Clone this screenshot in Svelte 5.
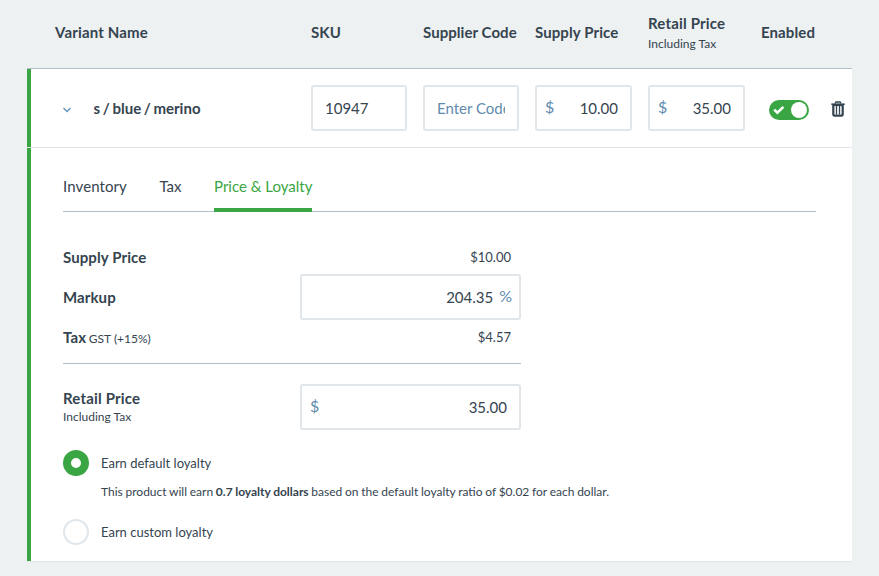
<script>
  let sku = $state('10947');
  let supplierCode = $state('');
  let supplyPrice = $state('10.00');
  let retailPrice = $state('35.00');
  let markup = $state('204.35');
  let enabled = $state(true);
  let loyalty = $state('default');
  let active = $state('Price & Loyalty');
  const tabs = ['Inventory', 'Tax', 'Price & Loyalty'];
</script>

<main>
  <header class="columns head">
    <span class="name">Variant Name</span>
    <span>SKU</span>
    <span class="tight">Supplier Code</span>
    <span>Supply Price</span>
    <span class="retail">Retail Price<small>Including Tax</small></span>
    <span>Enabled</span>
  </header>

  <section class="columns variant">
    <div class="name title">
      <svg class="chevron" width="8" height="6" viewBox="0 0 8 6"><path d="M.5 1 4 4.5 7.5 1" fill="none" stroke="#5f8fb8" stroke-width="1.3" /></svg>
      <strong>s / blue / merino</strong>
    </div>
    <input class="field" aria-label="SKU" bind:value={sku} />
    <input class="field" aria-label="Supplier code" placeholder="Enter Code" bind:value={supplierCode} />
    <label class="field money"><span>$</span><input aria-label="Supply price" bind:value={supplyPrice} /></label>
    <label class="field money"><span>$</span><input aria-label="Retail price" bind:value={retailPrice} /></label>
    <div class="actions">
      <button class="switch" class:off={!enabled} aria-label="Enabled" onclick={() => (enabled = !enabled)}>
        <svg width="12" height="10" viewBox="0 0 12 10"><path d="M1.2 4.6 4.4 7.7 10.4 1.8" fill="none" stroke="#fff" stroke-width="2.5" /></svg>
        <i></i>
      </button>
      <button class="trash" aria-label="Delete">
        <svg width="14" height="16" viewBox="0 0 14 16"><path d="M4.4 2.6V1.7Q4.4 1 5.1 1H8.9Q9.6 1 9.6 1.7V2.6" fill="none" stroke="#35444f" stroke-width="1.3" /><path d="M.3 2.4H13.7V4H.3Z" fill="#35444f" /><path d="M2.3 4V13.4Q2.3 14.7 3.6 14.7H10.4Q11.7 14.7 11.7 13.4V4" fill="none" stroke="#35444f" stroke-width="2.2" /><path d="M2 4.4H12" stroke="#35444f" stroke-width="1.4" /><path d="M5.5 5V13.5M8.5 5V13.5" stroke="#35444f" stroke-width="1.3" /></svg>
      </button>
    </div>
  </section>

  <section class="detail">
    <nav>
      {#each tabs as tab}
        <button class:active={active === tab} onclick={() => (active = tab)}>{tab}</button>
      {/each}
    </nav>

    <div class="pricing">
      <div class="line"><strong>Supply Price</strong><span class="amount">$10.00</span></div>
      <div class="line tall">
        <strong>Markup</strong>
        <label class="field percent"><input aria-label="Markup" bind:value={markup} /><span>%</span></label>
      </div>
      <div class="line"><strong class="tax">Tax <small>GST (+15%)</small></strong><span class="amount">$4.57</span></div>
      <div class="line total">
        <strong class="stack">Retail Price<small>Including Tax</small></strong>
        <label class="field money"><span>$</span><input aria-label="Retail price including tax" bind:value={retailPrice} /></label>
      </div>
    </div>

    <div class="loyalty">
      <label><input type="radio" name="loyalty" value="default" bind:group={loyalty} />Earn default loyalty</label>
      <p>This product will earn <b>0.7 loyalty dollars</b> based on the default loyalty ratio of $0.02 for each dollar.</p>
      <label><input type="radio" name="loyalty" value="custom" bind:group={loyalty} />Earn custom loyalty</label>
    </div>
  </section>
</main>

<style>
  :global(body) { margin: 0; background: #edf1f2; overflow: hidden; }
  main {
    box-sizing: border-box;
    width: 879px;
    height: 576px;
    padding: 0 27px;
    background: #edf1f2;
    color: #35444f;
    font: 15px/20px Lato, sans-serif;
  }
  button, input { font: inherit; color: inherit; margin: 0; }
  button { border: 0; padding: 0; background: none; cursor: pointer; }
  small { font-size: 12px; line-height: 16px; font-weight: 400; letter-spacing: 0; }
  .columns {
    display: grid;
    grid-template-columns: 268px 96px 96px 97px 97px 91px;
    column-gap: 16px;
    align-items: center;
    box-sizing: border-box;
  }
  .head { height: 69px; padding-bottom: 5px; border-bottom: 1px solid #b0bfc9; font-weight: 700; letter-spacing: .1px; white-space: nowrap; }
  .head .name { padding-left: 28px; letter-spacing: .15px; }
  .tight { letter-spacing: .06px; }
  .retail { letter-spacing: .18px; }
  .retail small { display: block; margin: 3px 0 -1px; }
  .variant { height: 79px; background: #fff; border-bottom: 1px solid #dfe4e6; box-shadow: inset 4px 0 #3aa643; }
  .title { display: flex; align-items: center; padding-left: 36px; gap: 22.6px; }
  .title strong { word-spacing: -1px; }
  .chevron { margin-top: 3px; }
  .field {
    box-sizing: border-box;
    width: 100%;
    height: 46px;
    border: 2px solid #e0e6ea;
    border-radius: 3px;
    padding: 0 12px;
    background: #fff;
    outline: 0;
  }
  .field::placeholder { color: #5f8cae; opacity: 1; }
  .money, .percent { display: flex; align-items: center; }
  .field span { color: #5f8cae; font-size: 16px; margin-top: -2px; }
  .field input { flex: 1; min-width: 0; border: 0; padding: 0; text-align: right; background: none; outline: 0; }
  .money { padding-left: 8px; }
  .percent { padding-right: 7px; gap: 6px; }
  .actions { display: flex; align-items: center; padding-left: 8px; gap: 22px; margin-top: 4px; }
  .switch { display: flex; align-items: center; justify-content: space-between; box-sizing: border-box; width: 40px; height: 20px; border-radius: 10px; padding: 0 2px 0 4px; background: #3aa643; }
  .switch.off { background: #b0bfc9; flex-direction: row-reverse; }
  .switch i { width: 16px; height: 16px; border-radius: 50%; background: #fff; }
  .trash { display: flex; margin-top: -3px; }

  .detail { box-sizing: border-box; height: 413px; padding: 28px 36px 0 32px; border-left: 4px solid #3aa643; background: #fff; box-shadow: 0 1px #dfe4e6; }
  nav { display: flex; gap: 32.5px; height: 36px; box-shadow: inset 0 -1px #b0bfc9; }
  nav button { box-sizing: border-box; height: 36px; padding-bottom: 12px; border-bottom: 4px solid transparent; white-space: nowrap; }
  nav button:first-child { letter-spacing: .1px; }
  nav button.active { color: #3aa643; border-color: #3aa643; }
  .pricing { width: 458px; padding-top: 31px; }
  .line { display: flex; align-items: center; justify-content: space-between; height: 28px; }
  .line strong { letter-spacing: .1px; }
  .line .field { width: 221px; }
  .tall { height: 52px; }
  .tax { word-spacing: -1px; }
  .tax small { word-spacing: 0; }
  .amount { font-size: 13px; padding-right: 10px; }
  .total { box-sizing: border-box; height: 87px; margin-top: 12px; border-top: 1px solid #b0bfc9; }
  .line .stack { margin-bottom: 1px; letter-spacing: .18px; }
  .stack small { display: block; margin-top: 1px; }
  .loyalty label { display: flex; align-items: center; gap: 12px; height: 26px; font-size: 13px; }
  .loyalty input { appearance: none; box-sizing: border-box; width: 26px; height: 26px; border: 2px solid #e0e6ea; border-radius: 50%; background: #fff; }
  .loyalty input:checked { border: 8px solid #3aa643; }
  .loyalty p { margin: 8px 0 19px 38px; font-size: 12px; line-height: 16px; word-spacing: -.35px; white-space: nowrap; }
</style>
